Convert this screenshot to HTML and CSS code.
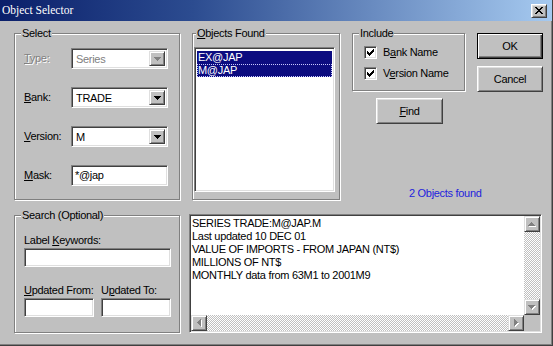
FILE: index.html
```html
<!DOCTYPE html>
<html>
<head>
<meta charset="utf-8">
<title>Object Selector</title>
<link rel="stylesheet" href="styles.css">
</head>
<body>
<div class="window">
  <div class="titlebar">
    <span class="title">Object Selector</span>
    <span class="close"><svg width="8" height="7" viewBox="0 0 8 7" shape-rendering="crispEdges"><path d="M0 0h2v1h-2zM6 0h2v1h-2zM1 1h2v1h-2zM5 1h2v1h-2zM2 2h4v1h-4zM3 3h2v1h-2zM2 4h4v1h-4zM1 5h2v1h-2zM5 5h2v1h-2zM0 6h2v1h-2zM6 6h2v1h-2z" fill="#000"/></svg></span>
  </div>
  <div class="content">
    <div class="row-top">
      <fieldset class="group g-select">
        <legend>Select</legend>
        <div class="gbody">
          <div class="field">
            <span class="lbl disabled"><u>T</u>ype:</span>
            <div class="combo dis"><span class="val">Series</span><span class="drop"><svg width="7" height="4" viewBox="0 0 7 4" shape-rendering="crispEdges"><path d="M0 0h7v1h-7zM1 1h5v1h-5zM2 2h3v1h-3zM3 3h1v1h-1z"/></svg></span></div>
          </div>
          <div class="field">
            <span class="lbl"><u>B</u>ank:</span>
            <div class="combo"><span class="val">TRADE</span><span class="drop"><svg width="7" height="4" viewBox="0 0 7 4" shape-rendering="crispEdges"><path d="M0 0h7v1h-7zM1 1h5v1h-5zM2 2h3v1h-3zM3 3h1v1h-1z"/></svg></span></div>
          </div>
          <div class="field">
            <span class="lbl"><u>V</u>ersion:</span>
            <div class="combo"><span class="val">M</span><span class="drop"><svg width="7" height="4" viewBox="0 0 7 4" shape-rendering="crispEdges"><path d="M0 0h7v1h-7zM1 1h5v1h-5zM2 2h3v1h-3zM3 3h1v1h-1z"/></svg></span></div>
          </div>
          <div class="field">
            <span class="lbl"><u>M</u>ask:</span>
            <div class="textbox mask">*@jap</div>
          </div>
        </div>
      </fieldset>

      <fieldset class="group g-objects">
        <legend><u>O</u>bjects Found</legend>
        <div class="gbody">
          <div class="listbox">
            <div class="item sel">EX@JAP</div>
            <div class="item sel focus">M@JAP</div>
          </div>
        </div>
      </fieldset>

      <div class="right">
        <div class="right-top">
          <fieldset class="group g-include">
            <legend>Include</legend>
            <div class="gbody">
              <div class="chk-row">
                <span class="check"><svg width="7" height="7" viewBox="0 0 7 7" shape-rendering="crispEdges"><path d="M6 0h1v1h-1zM5 1h2v1h-2zM0 2h1v1h-1zM4 2h3v1h-3zM0 3h2v1h-2zM3 3h3v1h-3zM0 4h5v1h-5zM1 5h3v1h-3zM2 6h1v1h-1z"/></svg></span>
                <span>B<u>a</u>nk Name</span>
              </div>
              <div class="chk-row">
                <span class="check"><svg width="7" height="7" viewBox="0 0 7 7" shape-rendering="crispEdges"><path d="M6 0h1v1h-1zM5 1h2v1h-2zM0 2h1v1h-1zM4 2h3v1h-3zM0 3h2v1h-2zM3 3h3v1h-3zM0 4h5v1h-5zM1 5h3v1h-3zM2 6h1v1h-1z"/></svg></span>
                <span>V<u>e</u>rsion Name</span>
              </div>
            </div>
          </fieldset>
          <div class="btn-col">
            <div class="btn default"><span>OK</span></div>
            <div class="btn">Cancel</div>
          </div>
        </div>
        <div class="btn find"><span><u>F</u>ind</span></div>
        <div class="count">2 Objects found</div>
      </div>
    </div>

    <div class="row-bottom">
      <fieldset class="group g-search">
        <legend>Search (Optional)</legend>
        <div class="gbody">
          <div class="lbl-line">Label <u>K</u>eywords:</div>
          <div class="textbox kw"></div>
          <div class="dates">
            <div class="date-col">
              <div class="lbl-line"><u>U</u>pdated From:</div>
              <div class="textbox date"></div>
            </div>
            <div class="date-col">
              <div class="lbl-line">U<u>p</u>dated To:</div>
              <div class="textbox date"></div>
            </div>
          </div>
        </div>
      </fieldset>

      <div class="details">
        <div class="details-text">
          <div>SERIES TRADE:M@JAP.M</div>
          <div>Last updated 10 DEC 01</div>
          <div>VALUE OF IMPORTS - FROM JAPAN (NT$)</div>
          <div>MILLIONS OF NT$</div>
          <div>MONTHLY data from 63M1 to 2001M9</div>
        </div>
        <div class="vscroll">
          <span class="sbtn"><svg width="8" height="5" viewBox="0 0 8 5" shape-rendering="crispEdges"><path fill="#fff" d="M4 1h1v1h-1zM3 2h3v1h-3zM2 3h5v1h-5zM1 4h7v1h-7z"/><path fill="#808080" d="M3 0h1v1h-1zM2 1h3v1h-3zM1 2h5v1h-5zM0 3h7v1h-7z"/></svg></span>
          <span class="track"></span>
          <span class="sbtn"><svg width="8" height="5" viewBox="0 0 8 5" shape-rendering="crispEdges"><path fill="#fff" d="M1 1h7v1h-7zM2 2h5v1h-5zM3 3h3v1h-3zM4 4h1v1h-1z"/><path fill="#808080" d="M0 0h7v1h-7zM1 1h5v1h-5zM2 2h3v1h-3zM3 3h1v1h-1z"/></svg></span>
        </div>
        <div class="hscroll">
          <span class="sbtn"><svg width="5" height="8" viewBox="0 0 5 8" shape-rendering="crispEdges"><path fill="#fff" d="M1 4h1v1h-1zM2 3h1v3h-1zM3 2h1v5h-1zM4 1h1v7h-1z"/><path fill="#808080" d="M0 3h1v1h-1zM1 2h1v3h-1zM2 1h1v5h-1zM3 0h1v7h-1z"/></svg></span>
          <span class="track"></span>
          <span class="sbtn"><svg width="5" height="8" viewBox="0 0 5 8" shape-rendering="crispEdges"><path fill="#fff" d="M1 1h1v7h-1zM2 2h1v5h-1zM3 3h1v3h-1zM4 4h1v1h-1z"/><path fill="#808080" d="M0 0h1v7h-1zM1 1h1v5h-1zM2 2h1v3h-1zM3 3h1v1h-1z"/></svg></span>
        </div>
        <div class="corner"></div>
      </div>
    </div>
  </div>
</div>
</body>
</html>
```

FILE: styles.css
```css
* { box-sizing: border-box; }

html, body {
  margin: 0;
  padding: 0;
}

body {
  width: 553px;
  height: 346px;
  overflow: hidden;
  background: #c0c0c0;
  font-family: "Liberation Sans", Arial, sans-serif;
  font-size: 11px;
  line-height: 13px;
  letter-spacing: -0.3px;
  color: #000;
}

.window {
  width: 553px;
  height: 346px;
  background: #c0c0c0;
  border-right: 1px solid #404040;
  border-bottom: 1px solid #404040;
  box-shadow: inset -1px -1px #808080;
  display: flex;
  flex-direction: column;
}

/* title bar */
.titlebar {
  height: 21px;
  flex: none;
  display: flex;
  align-items: center;
  padding: 0 5px 0 2px;
  background: linear-gradient(to right, #0a1f6a 0%, #2c4c90 35%, #a6caf0 100%);
  color: #fff;
  font-family: "Liberation Serif", "Times New Roman", serif;
  font-size: 11.5px;
  letter-spacing: 0;
}

.title { flex: 1; }

.close {
  width: 16px;
  height: 14px;
  background: #c0c0c0;
  border: 1px solid;
  border-color: #fff #404040 #404040 #fff;
  box-shadow: inset 1px 1px #dfdfdf, inset -1px -1px #808080;
  display: flex;
  align-items: center;
  justify-content: center;
}

/* content */
.content {
  flex: 1;
  padding: 6px 0 0 14px;
  display: flex;
  flex-direction: column;
}

.row-top {
  display: flex;
  height: 173px;
}

.row-bottom {
  display: flex;
  align-items: flex-start;
  margin-top: 9px;
}

/* group boxes */
.group {
  margin: 0;
  padding: 0;
  min-width: 0;
  border: 1px solid #808080;
  box-shadow: inset 1px 1px #fff, 1px 1px #fff;
}

.group legend {
  margin-left: 6px;
  padding: 0 1px;
  line-height: 13px;
  background: #c0c0c0;
}

.g-select {
  width: 166px;
  height: 173px;
}

.g-select .gbody {
  padding: 8px 0 0 9px;
  display: flex;
  flex-direction: column;
  gap: 18px;
}

.g-objects {
  width: 148px;
  height: 173px;
  margin-left: 12px;
}

.g-objects legend { margin-left: 3px; }

.g-objects .gbody {
  padding: 7px 0 0 1px;
}

.g-include {
  width: 113px;
  height: 64px;
}

.g-include .gbody {
  padding: 6px 0 0 11px;
  display: flex;
  flex-direction: column;
  gap: 8px;
}

.g-search {
  width: 166px;
  height: 124px;
}

.g-search .gbody {
  padding: 12px 0 0 9px;
}

/* fields */
.field {
  display: flex;
  align-items: center;
  height: 21px;
}

.lbl {
  width: 47px;
  flex: none;
}

.lbl.disabled {
  color: #808080;
  text-shadow: 1px 1px #fff;
}

.combo, .textbox, .listbox {
  background: #fff;
  border: 1px solid;
  border-color: #808080 #fff #fff #808080;
  box-shadow: inset 1px 1px #404040, inset -1px -1px #dfdfdf;
}

.combo {
  width: 97px;
  height: 21px;
  display: flex;
  align-items: stretch;
  padding: 2px;
}

.combo .val {
  flex: 1;
  padding-left: 2px;
  line-height: 17px;
}

.combo.dis .val { color: #808080; }

.drop {
  width: 16px;
  flex: none;
  background: #c0c0c0;
  border: 1px solid;
  border-color: #dfdfdf #404040 #404040 #dfdfdf;
  box-shadow: inset 1px 1px #fff, inset -1px -1px #808080;
  display: flex;
  align-items: center;
  justify-content: center;
}

.drop svg { fill: #000; }
.combo.dis .drop svg { fill: #808080; }

.textbox.mask {
  width: 97px;
  height: 21px;
  padding: 0 3px;
  line-height: 19px;
}

/* list */
.listbox {
  width: 141px;
  height: 145px;
  padding: 2px;
}

.item {
  height: 13px;
  line-height: 13px;
  padding-left: 1px;
  margin-top: 1px;
}

.item + .item { margin-top: 0; }

.item.sel {
  background: #0c0c80;
  color: #fff;
}

.item.focus {
  outline: 1px dotted #c8c8ff;
  outline-offset: -1px;
}

/* include */
.chk-row {
  display: flex;
  align-items: center;
  gap: 6px;
  height: 13px;
}

.check {
  width: 13px;
  height: 13px;
  flex: none;
  background: #fff;
  border: 1px solid;
  border-color: #808080 #fff #fff #808080;
  box-shadow: inset 1px 1px #404040, inset -1px -1px #dfdfdf;
  display: flex;
  align-items: center;
  justify-content: center;
}

.check svg { fill: #000; }

/* right column */
.right {
  width: 191px;
  margin-left: 12px;
  display: flex;
  flex-direction: column;
}

.right-top {
  display: flex;
  align-items: flex-start;
}

.btn-col {
  margin-left: 12px;
  padding-top: 6px;
  display: flex;
  flex-direction: column;
  gap: 7px;
}

.btn {
  width: 66px;
  height: 26px;
  background: #c0c0c0;
  border: 1px solid;
  border-color: #fff #404040 #404040 #fff;
  box-shadow: inset 1px 1px #dfdfdf, inset -1px -1px #808080;
  display: flex;
  align-items: center;
  justify-content: center;
}

.btn.default {
  border: 1px solid #000;
  box-shadow: inset 1px 1px #fff, inset -1px -1px #404040, inset -2px -2px #808080;
}

.btn.find {
  width: 67px;
  margin: 6px 0 0 24px;
}

.count {
  margin-top: auto;
  padding-left: 57px;
  color: #2222dd;
  line-height: 13px;
}

/* search */
.lbl-line {
  line-height: 13px;
  white-space: nowrap;
}

.textbox.kw {
  width: 147px;
  height: 19px;
  margin-top: 1px;
}

.dates {
  display: flex;
  gap: 7px;
  margin-top: 17px;
}

.date-col {
  width: 70px;
  flex: none;
}

.textbox.date {
  width: 70px;
  height: 19px;
  margin-top: 1px;
}

/* details */
.details {
  width: 353px;
  height: 119px;
  margin: 5px 0 0 9px;
  background: #fff;
  border: 1px solid;
  border-color: #808080 #fff #fff #808080;
  box-shadow: inset 1px 1px #404040, inset -1px -1px #dfdfdf;
  padding: 1px;
  display: grid;
  grid-template-columns: 1fr 16px;
  grid-template-rows: 1fr 16px;
}

.details-text {
  padding: 1px 0 0 1px;
  line-height: 13px;
  white-space: nowrap;
  overflow: hidden;
}

.vscroll {
  display: flex;
  flex-direction: column;
}

.hscroll {
  display: flex;
}

.track {
  flex: 1;
  background-color: #fff;
  background-image: repeating-conic-gradient(#c0c0c0 0 25%, #fff 0 50%);
  background-size: 2px 2px;
}

.sbtn {
  width: 16px;
  height: 16px;
  flex: none;
  background: #c0c0c0;
  border: 1px solid;
  border-color: #dfdfdf #404040 #404040 #dfdfdf;
  box-shadow: inset 1px 1px #fff, inset -1px -1px #808080;
  display: flex;
  align-items: center;
  justify-content: center;
}

.corner {
  background: #c0c0c0;
}
```
